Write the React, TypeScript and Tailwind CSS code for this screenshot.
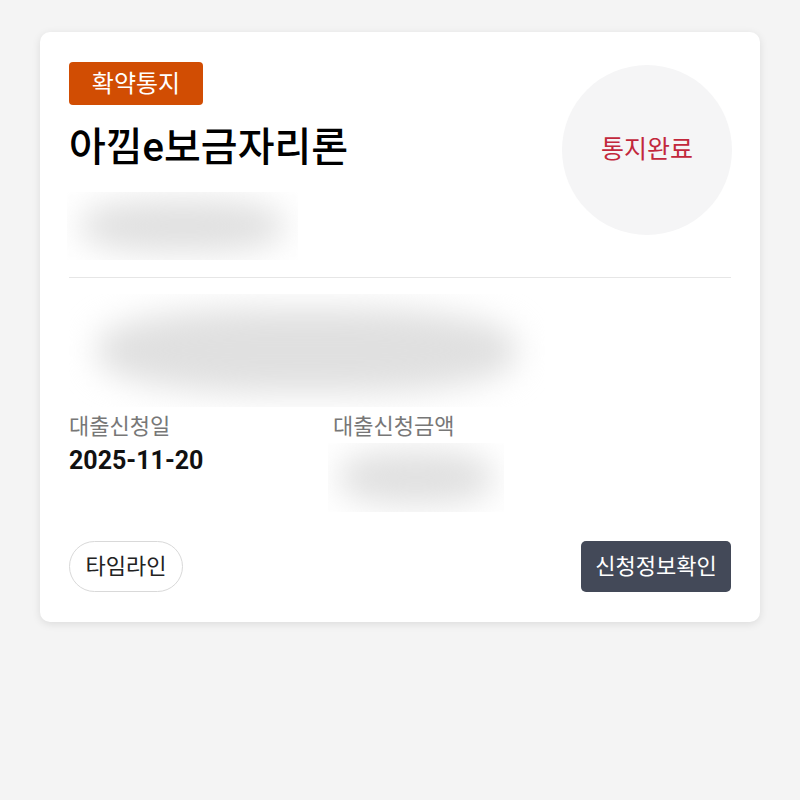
import React from 'react';

// Placeholder block for masked content (appears blurred in the screenshot)
function Blur({ className }: { className: string }) {
  return (
    <div className={`relative overflow-hidden ${className}`}>
      <div className="absolute inset-x-[6%] inset-y-[12%] rounded-[40%] bg-[#e0e0e0] blur-lg" />
    </div>
  );
}

export default function App() {
  return (
    <div
      className="min-h-[800px] w-full bg-[#f4f4f4] px-10 pt-8"
      style={{ fontFamily: 'Roboto, "Noto Sans CJK KR", sans-serif' }}
    >
      <div className="rounded-[10px] bg-white px-[29px] pt-[30px] pb-[30px] shadow-[0_2px_8px_rgba(0,0,0,0.10)]">
        {/* Top row */}
        <div className="flex justify-between">
          <div className="flex flex-col">
            <span className="flex h-[43px] w-[134px] items-center justify-center rounded-[4px] bg-[#d14d03] text-[24px] text-white">
              확약통지
            </span>
            <h1 className="mt-[15px] text-[40px] leading-[56px] font-medium text-black">아낌e보금자리론</h1>
            <Blur className="mt-[16px] h-[68px] w-[231px] -ml-[2px]" />
          </div>
          <div className="mt-[3px] -mr-[1px] flex h-[170px] w-[170px] items-center justify-center rounded-full bg-[#f5f5f6] text-[25px] text-[#c2283c]">
            통지완료
          </div>
        </div>

        <div className="mt-[17px] h-px bg-[#e6e6e6]" />

        <Blur className="mt-[16px] h-[113px] w-[476px]" />

        {/* Loan info */}
        <div className="mt-[5px] flex">
          <div className="w-[264px]">
            <div className="text-[22px] leading-[30px] text-[#777]">대출신청일</div>
            <div className="mt-[4px] text-[25px] leading-[30px] font-bold text-[#111]">2025-11-20</div>
          </div>
          <div>
            <div className="text-[22px] leading-[30px] text-[#777]">대출신청금액</div>
            <Blur className="mt-[1px] -ml-[5px] h-[69px] w-[176px]" />
          </div>
        </div>

        {/* Actions */}
        <div className="mt-[29px] flex items-center justify-between">
          <button className="h-[51px] w-[114px] rounded-full border border-[#d9d9d9] text-[22px] text-[#222]">
            타임라인
          </button>
          <button className="h-[51px] w-[150px] rounded-[5px] bg-[#434958] text-[22px] text-white">
            신청정보확인
          </button>
        </div>
      </div>
    </div>
  );
}
